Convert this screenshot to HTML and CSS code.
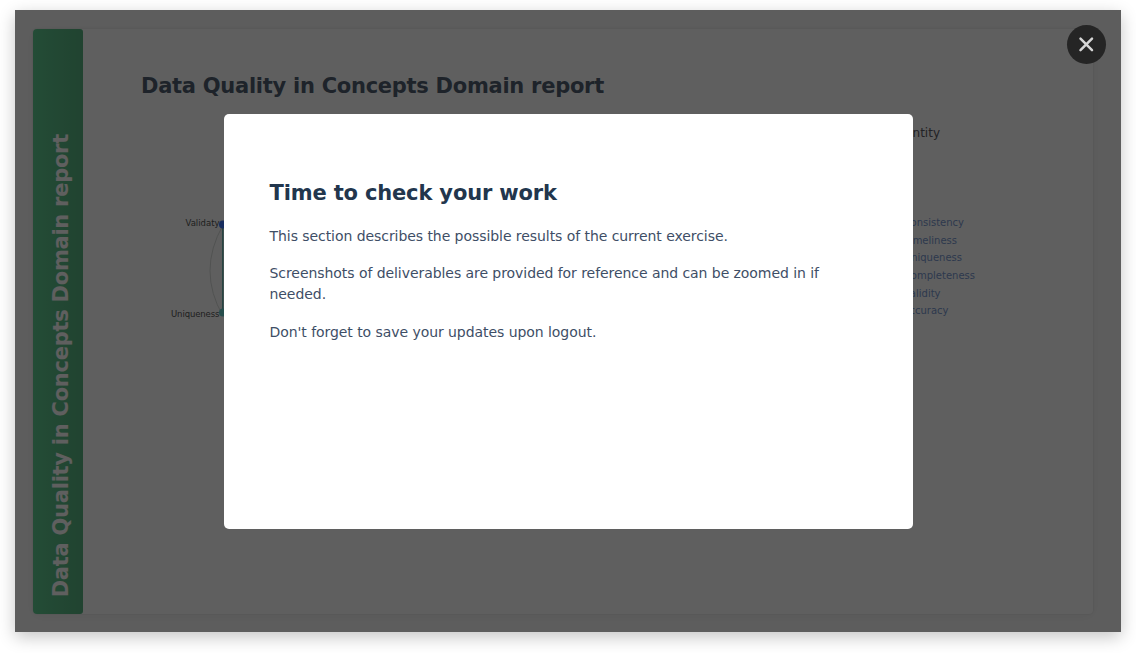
FILE: index.html
```html
<!DOCTYPE html>
<html lang="en">
<head>
<meta charset="utf-8">
<title>Data Quality in Concepts Domain report</title>
<link rel="stylesheet" href="styles.css">
</head>
<body>
<main class="stage">
  <article class="report">
    <div class="tab"><span class="tab-label">Data Quality in Concepts Domain report</span></div>
    <section class="content">
      <h1 class="report-title">Data Quality in Concepts Domain report</h1>
      <svg class="chart" width="950" height="240" viewBox="110 110 950 240">
        <path d="M223 225 Q197 271 223 316" fill="none" stroke="#d8dcda"/>
        <path d="M222.800 225 V313" stroke="#65b5b0" stroke-width="1.500"/>
        <circle cx="223" cy="224.500" r="4" fill="#4178ff"/>
        <circle cx="223" cy="312.500" r="4" fill="#68d0cc"/>
        <g class="node-labels">
          <text x="185.500" y="225.500" textLength="34">Validaty</text>
          <text x="171" y="317" textLength="48.500">Uniqueness</text>
        </g>
        <text class="chart-title" x="940" y="137" text-anchor="end">Entity</text>
        <g class="legend" text-anchor="end">
          <text x="964" y="226">Consistency</text>
          <text x="957" y="243.500">Timeliness</text>
          <text x="962" y="261">Uniqueness</text>
          <text x="975" y="278.700">Completeness</text>
          <text x="940.500" y="296.500">Validity</text>
          <text x="948.500" y="314">Accuracy</text>
        </g>
      </svg>
    </section>
  </article>
  <div class="overlay">
    <section class="dialog">
      <h2 class="dialog-title">Time to check your work</h2>
      <p>This section describes the possible results of the current exercise.</p>
      <p>Screenshots of deliverables are provided for reference and can be zoomed in if needed.</p>
      <p>Don't forget to save your updates upon logout.</p>
    </section>
    <button class="close" aria-label="Close">
      <svg width="17" height="17" viewBox="0 0 17 17"><path d="M2.500 2.700 L14 14.200 M14 2.700 L2.500 14.200" stroke="#d6d6d6" stroke-width="2.500" stroke-linecap="round"/></svg>
    </button>
  </div>
</main>
</body>
</html>
```
FILE: styles.css
```css
* { box-sizing: border-box; }
body {
  margin: 0;
  padding: 10px 15px 0;
  height: 653px;
  overflow: hidden;
  background: #fff;
  font-family: "DejaVu Sans", Verdana, sans-serif;
}
.stage {
  position: relative;
  width: 1106px;
  height: 622px;
  padding: 18.600px 28px 18.400px 18.400px;
  background: #fafafa;
  box-shadow: 0 5px 16px rgba(0, 0, 0, .23);
}
.report {
  display: flex;
  height: 585px;
  border-radius: 4px;
  background: #fff;
  box-shadow: 0 0 2px rgba(0, 0, 0, .12), 0 2px 14px rgba(0, 0, 0, .05);
}
.tab {
  display: flex;
  width: 49.600px;
  justify-content: center;
  align-items: flex-end;
  padding: 0 0 16.500px 5px;
  border-radius: 4px 3px 3px 4px;
  background: linear-gradient(90deg, #60cc91, #58b482);
}
.tab-label {
  writing-mode: vertical-rl;
  transform: rotate(180deg);
  color: #fff;
  font-size: 21px;
  line-height: 28px;
  font-weight: 700;
  letter-spacing: -.26px;
  white-space: nowrap;
}
.content { flex: 1; padding: 44px 0 0 27px; }
.report-title {
  margin: 0 0 12px 31px;
  font-size: 21px;
  line-height: 26px;
  letter-spacing: -.27px;
  color: #505f70;
  white-space: nowrap;
}
.chart { display: block; margin-top: -1px; }
.node-labels { font-size: 8.500px; fill: #555; }
.chart-title { font-size: 12px; fill: #5c5c66; }
.legend { font-size: 10px; fill: #7a98d0; }
.overlay {
  position: absolute;
  inset: 0;
  display: flex;
  align-items: center;
  justify-content: center;
  background: rgba(0, 0, 0, .627);
}
.dialog {
  width: 689px;
  height: 415px;
  padding: 64px 46px 0;
  border-radius: 5px;
  background: #fff;
  color: #3e4e66;
  font-size: 14px;
  line-height: 21px;
  letter-spacing: -.06px;
}
.dialog-title {
  margin: 0 0 18px;
  font-size: 21px;
  line-height: 30px;
  letter-spacing: -.16px;
  color: #22364d;
}
.dialog p { margin: 0 0 16.500px; }
.close {
  position: absolute;
  top: 15px;
  right: 15px;
  display: grid;
  place-items: center;
  width: 39px;
  height: 39px;
  padding: 0;
  border: 0;
  border-radius: 50%;
  background: #252525;
}
```
